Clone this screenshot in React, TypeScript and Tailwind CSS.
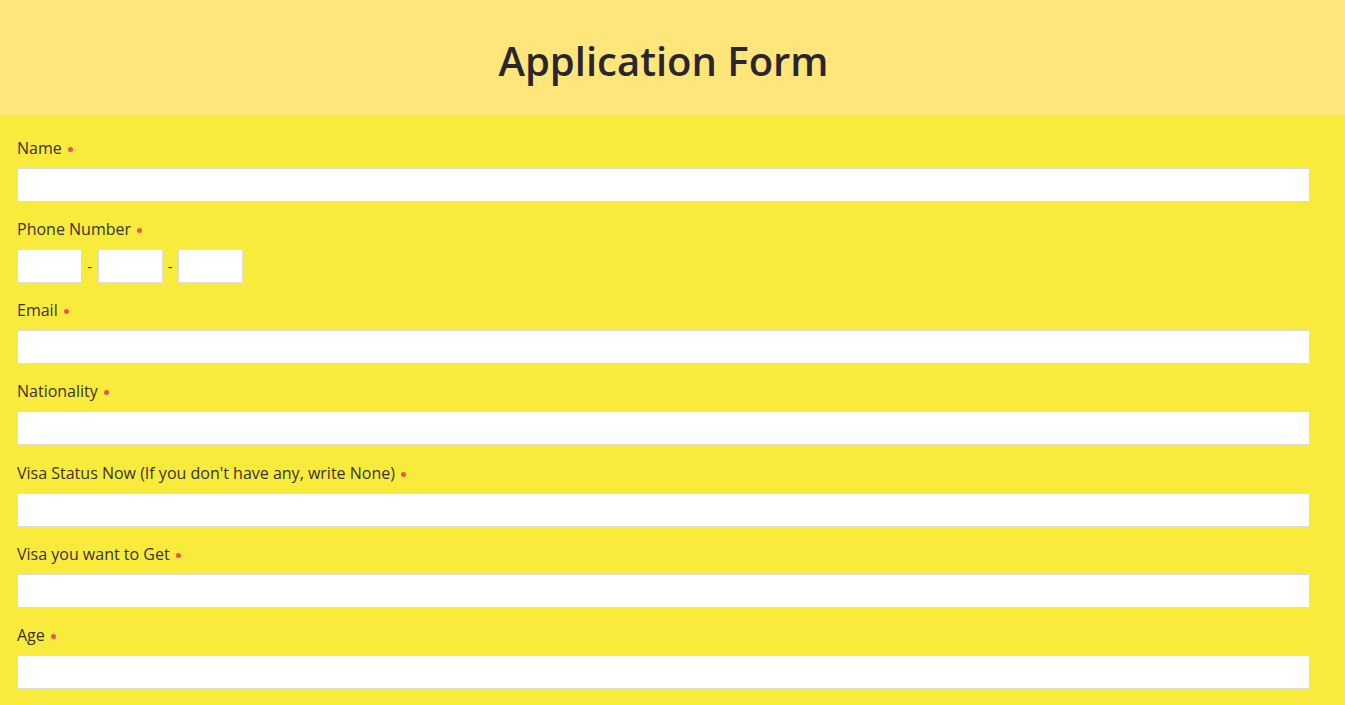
import { FC } from "react";

type TField = {
  label: string;
};

const Label: FC<TField> = ({ label }) => (
  <div className="flex items-center h-[22px] text-[16px] leading-[22px] text-[#393434]">
    <span>{label}</span>
    <span className="ml-[6px] mt-[3px] h-[5px] w-[5px] rounded-full bg-[#f2505a]"></span>
  </div>
);

const TextField: FC<TField> = ({ label }) => (
  <div className="flex flex-col mb-[16.17px]">
    <Label label={label} />
    <input
      className="mt-[9px] h-[34px] w-full bg-white border border-[#dcdcdc] outline-none"
      type="text"
    />
  </div>
);

const PhoneField: FC = () => (
  <div className="flex flex-col mb-[16.17px]">
    <Label label="Phone Number" />
    <div className="mt-[9px] flex items-center">
      <input className="h-[34px] w-[65px] bg-white border border-[#dcdcdc] outline-none" type="text" />
      <span className="w-[15.5px] text-center text-[15px] text-[#393434]">-</span>
      <input className="h-[34px] w-[65px] bg-white border border-[#dcdcdc] outline-none" type="text" />
      <span className="w-[15.5px] text-center text-[15px] text-[#393434]">-</span>
      <input className="h-[34px] w-[65px] bg-white border border-[#dcdcdc] outline-none" type="text" />
    </div>
  </div>
);

export default function App() {
  return (
    <div className="min-h-screen bg-[#f9eb3c] font-['Open_Sans',sans-serif]">
      <header className="h-[115px] bg-[#ffe67a] flex items-center justify-center pr-[18px]">
        <h1 className="text-[40px] font-semibold text-[#2b2431] pt-[6px]">Application Form</h1>
      </header>
      <form className="pt-[22px] pl-[17px] pr-[35px]">
        <TextField label="Name" />
        <PhoneField />
        <TextField label="Email" />
        <TextField label="Nationality" />
        <TextField label="Visa Status Now (If you don't have any, write None)" />
        <TextField label="Visa you want to Get" />
        <TextField label="Age" />
      </form>
    </div>
  );
}
